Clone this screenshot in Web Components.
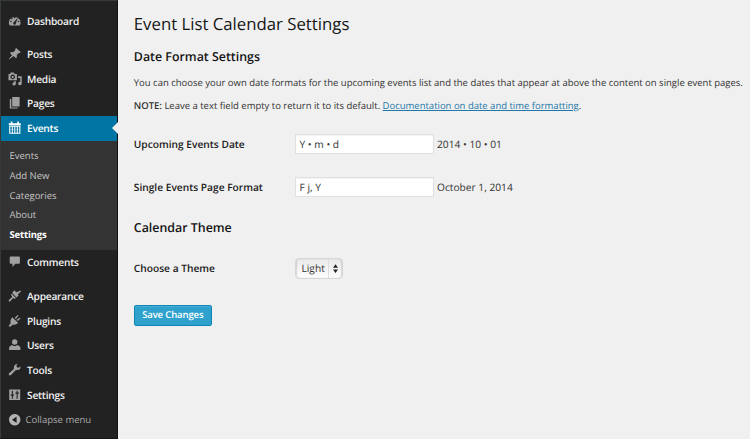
<!DOCTYPE html>
<html lang="en"><head><meta charset="utf-8"><title>Event List Calendar Settings</title>
<style>
html,body{margin:0;height:100%;overflow:hidden;background:#f0f0f0}
body{font-family:"Open Sans","Noto Sans",sans-serif;font-size:10.2px;color:#333;text-rendering:geometricPrecision}
</style></head><body>
<admin-page></admin-page>
<script>
const ICONS={
dashboard:'<path d="M1.2 10.6A5.8 5.8 0 1 1 12.2 10.6Q12 11.5 11 11.5H2.4Q1.4 11.5 1.2 10.6Z"/><g fill="#222"><circle cx="6.7" cy="3.5" r=".8"/><circle cx="3.9" cy="4.6" r=".8"/><circle cx="2.9" cy="7.5" r=".8"/><circle cx="10.6" cy="7.5" r=".8"/><path d="M9.9 3.6L7.8 9.6A1.3 1.3 0 1 1 5.8 8.3Z"/></g>',
pin:'<path d="M8.2.9l4.600 4.400-1 .8-1-.2-2 2.200.1 2.100-1 1-2.200-2.100L1 12.500.7 12.200 4 8.200 2 6.100l1-1 2.200.1 2.100-2-.1-1.200z"/>',
media:'<path fill-rule="evenodd" d="M.5 1.900h1.400L2.800.6h3l.9 1.300h2.200v6.400H.5zM4.700 2.600a2.300 2.300 0 1 0 .01 0zM4.700 3.800a1.100 1.100 0 1 1-.01 0z"/><path d="M10 4.200h3.700v7.200a1.800 1.800 0 1 1-1.500-1.700V6H10zM6.400 8.900h1.400v2.900a1.700 1.700 0 1 1-1.400-1.600z"/>',
pages:'<path d="M4.200 1h7.400v9.500H4.200z"/><path d="M1.800 3h1.500v8.500h6.400v1H1.800z"/>',
events:'<path d="M.8 2.300h1.900V.6h1.700v1.700h4.800V.6h1.700v1.700h1.900v2.200H.8z"/><path fill-rule="evenodd" d="M1.200 5h11.200v7.800H1.200zM2.300 5.700v6h1.500v-6zm2.500 0v6h1.500v-6zm2.500 0v6h1.500v-6zm2.500 0v6h1.500v-6z"/><path d="M1.500 8.400h10.600v.6H1.500z" opacity=".4"/>',
comments:'<path d="M2.700 1.500h8.200q1 0 1 1v5.300q0 1-1 1H7.300L4.500 12V8.800H2.700q-1 0-1-1V2.500q0-1 1-1z"/>',
appearance:'<path d="M6.200 1.200L8.300 3.200 12.900 1.500 13.300 2 9.800 5.500 10.600 6.500 8.500 8.500 4.100 4.100z"/><path d="M3.500 4.700L7.900 9.100 6.900 9.900 5.200 9.100 2.500 12Q1.300 12.900.8 12.200.2 11.600 1.300 10.600L4.200 7.900 2.900 5.500z"/>',
plugins:'<path d="M4.300 3.200L10.200 9.100Q7.500 11.500 4.800 10.600L2.800 12.400H.8V11.400L2.700 9.200Q1.700 6 4.300 3.200z"/><path d="M6.700 3.800L9.400 1.200Q10.200.9 10.400 1.700L7.900 5zM8.600 5.800L11.700 3.700Q12.600 3.800 12.400 4.600L9.800 7z"/>',
users:'<circle cx="6.7" cy="4" r="2.7"/><path d="M1.100 12V9.600Q1.500 7.400 4.300 6.900 6.700 9.300 9.100 6.900 12 7.400 12.400 9.600V12z"/>',
tools:'<path d="M12.500 3.600Q12.800 7.300 8.800 7.100 7.800 7 7.300 7.400L3 12Q2 12.900 1.100 12 .2 11.100 1.100 10.200L5.600 6.200Q6 5.600 5.900 4.700 5.800 1 9.600.9L8.200 3.100 9.900 5.100z"/>',
settings:'<path fill-rule="evenodd" d="M1.200 1.500h11v10.500h-11zM3.800 2.700v3.800H2.700v1.200h1.100v3h1.100v-3H6V6.500H4.900V2.700zM8.600 2.700v1.800H7.400v1.200h1.200v5h1.100v-5h1.200V4.500H9.700V2.700z"/>',
collapse:'<path fill-rule="evenodd" d="M6.700 1a5.700 5.700 0 1 0 .01 0zM8.600 3.500v6.600L4 6.800z"/>'};

function define(tag,render){
  customElements.define(tag,class extends HTMLElement{
    connectedCallback(){if(!this.shadowRoot)this.attachShadow({mode:'open'}).innerHTML=render(this)}
  });
}

define('admin-icon',el=>`<style>:host{display:block;width:14px;height:14px}svg{display:block;fill:currentColor}</style>
<svg width="14" height="14" viewBox="0 0 14 14">${ICONS[el.getAttribute('name')]}</svg>`);

define('menu-item',el=>`<style>
:host{display:flex;align-items:center;box-sizing:border-box;height:24.75px;padding-left:6.5px;gap:5.5px;color:#f2f2f2;font-size:10.2px;font-weight:600;letter-spacing:-.22px;white-space:nowrap;position:relative}
admin-icon{color:#a0a0a0}
:host([current]){background:#0074a2;color:#fff}
:host([current]) admin-icon{color:#fff}
:host([current])::after{content:"";position:absolute;right:-1px;top:6px;border:6px solid transparent;border-right-color:#f0f0f0;border-left:0}
:host([collapse]){font-weight:400;color:#aaa;gap:4px;font-size:9.5px;letter-spacing:0}
:host([collapse]) admin-icon{color:#b4b4b4}
</style><admin-icon name="${el.getAttribute('icon')}"></admin-icon><span><slot></slot></span>`);

define('sub-menu',()=>`<style>
:host{display:flex;flex-direction:column;background:#333;height:109.5px;box-sizing:border-box;padding:5.5px 0 0 8.5px;color:#c4c4c4;font-size:9.5px}
::slotted(span){height:19.8px;line-height:19.8px}
::slotted(.on){color:#fff;font-weight:700;letter-spacing:-.15px}
</style><slot></slot>`);

define('admin-menu',()=>`<style>
:host{display:block;box-sizing:border-box;width:118px;height:439px;background:#222;padding-top:7.5px;border:1px solid #353a3a;border-right-color:#111;border-bottom-color:#151515}
.gap{height:8.3px}.gap.low{height:8.8px}
</style>
<menu-item icon="dashboard">Dashboard</menu-item><div class="gap"></div>
<menu-item icon="pin">Posts</menu-item><menu-item icon="media">Media</menu-item><menu-item icon="pages">Pages</menu-item><menu-item icon="events" current>Events</menu-item>
<sub-menu><span>Events</span><span>Add New</span><span>Categories</span><span>About</span><span class="on">Settings</span></sub-menu>
<menu-item icon="comments">Comments</menu-item><div class="gap low"></div>
<menu-item icon="appearance">Appearance</menu-item><menu-item icon="plugins">Plugins</menu-item><menu-item icon="users">Users</menu-item><menu-item icon="tools">Tools</menu-item><menu-item icon="settings">Settings</menu-item><menu-item icon="collapse" collapse>Collapse menu</menu-item>`);

define('field-row',el=>`<style>
:host{display:grid;grid-template-columns:161.2px auto;align-items:center;height:20px;color:#333}
b{font-weight:600;color:#1a1a1a}
div{display:flex;align-items:center;gap:3px}
</style><b>${el.getAttribute('label')}</b><div><slot></slot></div>`);

define('text-field',()=>`<style>
:host{display:block;box-sizing:border-box;width:139px;height:20px;border:1px solid #e0e0e0;background:#fff;padding-left:3.5px;line-height:18px;box-shadow:inset 0 1px 1px #0000000d}
</style><slot></slot>`);

define('select-box',()=>`<style>
:host{display:flex;box-sizing:border-box;width:48px;height:21px;border:1px solid #d6d6d6;border-radius:4px;background:linear-gradient(#e9e9e9,#fdfdfd);line-height:19px;padding-left:5.500px;justify-content:space-between;box-shadow:inset 1px 0 1px #0002,inset -1px 0 1px #0002}
svg{border-left:1px solid #ddd}
</style><span><slot></slot></span><svg width="13" height="19"><path fill="#222" d="M4 8.800L6.500 5.300 9 8.800zM4 10.500L6.500 14 9 10.500z"/></svg>`);

define('save-button',()=>`<style>
:host{display:block;box-sizing:border-box;width:78px;height:21px;border:1px solid #0f86b4;border-radius:2px;background:#2ea2cc;color:#fff;line-height:18px;text-align:center;font-size:9.5px;font-weight:600;letter-spacing:-.12px;box-shadow:inset 0 1px #48b0d6}
</style><slot></slot>`);

define('admin-page',()=>`<style>
:host{display:grid;grid-template-columns:118px 1fr;height:439px;background:#f0f0f0}
main{padding:9px 0 0 15.8px;white-space:nowrap}
h1{margin:0;font-weight:400;font-size:16.75px;line-height:30px;color:#151515}
h2{margin:7.5px 0 0;font-weight:600;font-size:12.4px;line-height:20px;color:#151515}
p{margin:8.5px 0 0;font-size:9.49px;line-height:16px}
p+p{margin-top:7px}
b{font-weight:600}
a{color:#1f78a8;text-decoration:underline}
field-row{margin-top:23px}
.first{margin-top:20px}
.theme{margin-top:20.5px}
.choice{margin-top:20.3px}
save-button{margin-top:27px}
</style>
<admin-menu></admin-menu><main>
<h1>Event List Calendar Settings</h1>
<h2>Date Format Settings</h2>
<p>You can choose your own date formats for the upcoming events list and the dates that appear at above the content on single event pages.</p>
<p><b>NOTE:</b> Leave a text field empty to return it to its default. <a>Documentation on date and time formatting</a>.</p>
<field-row class="first" label="Upcoming Events Date"><text-field>Y • m • d</text-field><span>2014 • 10 • 01</span></field-row>
<field-row label="Single Events Page Format"><text-field>F j, Y</text-field><span>October 1, 2014</span></field-row>
<h2 class="theme">Calendar Theme</h2>
<field-row class="choice" label="Choose a Theme"><select-box>Light</select-box></field-row>
<save-button>Save Changes</save-button>
</main>`);
</script></body></html>
